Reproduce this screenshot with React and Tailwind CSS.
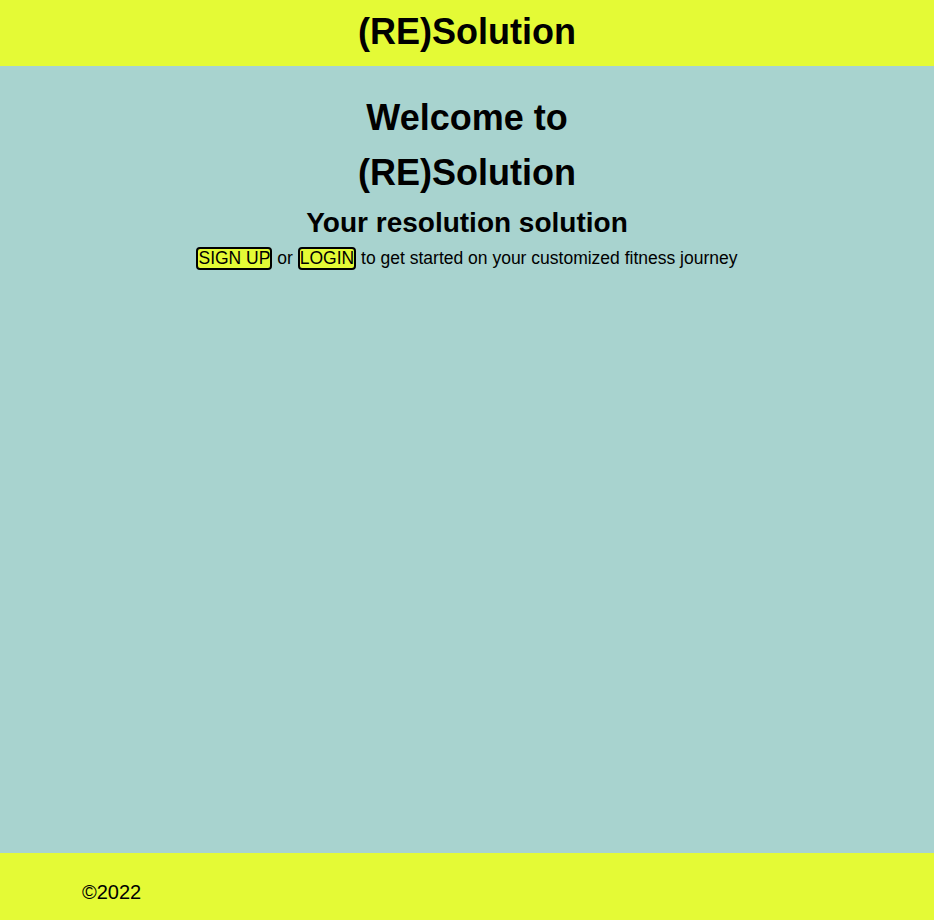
export default function App() {
  return (
    <div className="flex flex-col h-screen bg-[#a8d3cf] text-black" style={{ fontFamily: '"Liberation Sans", Arial, sans-serif' }}>
      <header className="h-[66px] bg-[#e4fa36] flex items-center justify-center shrink-0 pb-[2px]">
        <h1 className="text-[36px] font-bold leading-none">(RE)Solution</h1>
      </header>
      <main className="flex-1 flex flex-col items-center pt-[24px]">
        <h2 className="text-[36px] font-bold leading-[55px] text-center">Welcome to<br />(RE)Solution</h2>
        <h3 className="text-[28px] font-bold leading-[38px] mt-[4px]">Your resolution solution</h3>
        <p className="text-[17.5px] mt-[3px]">
          <button className="bg-[#e4fa36] border-2 border-black rounded-[4px] px-0 leading-[19px]">SIGN UP</button>
          {' or '}
          <button className="bg-[#e4fa36] border-2 border-black rounded-[4px] px-0 leading-[19px]">LOGIN</button>
          {' to get started on your customized fitness journey'}
        </p>
      </main>
      <footer className="h-[67px] bg-[#e4fa36] flex items-center pl-[82px] pt-[10px] shrink-0">
        <span className="text-[20px]">©2022</span>
      </footer>
    </div>
  );
}
